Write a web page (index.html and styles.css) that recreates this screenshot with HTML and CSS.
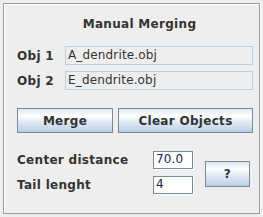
FILE: index.html
```html
<!DOCTYPE html>
<html lang="en">
<head>
  <meta charset="UTF-8" />
  <title>Manual Merging</title>
  <link rel="stylesheet" href="styles.css">
</head>
<body>

<div class="panel">
  <div class="title">Manual Merging</div>

  <div class="obj-row">
    <span class="lbl">Obj 1</span>
    <div class="field readonly">A_dendrite.obj</div>
  </div>
  <div class="obj-row">
    <span class="lbl">Obj 2</span>
    <div class="field readonly">E_dendrite.obj</div>
  </div>

  <div class="btn-row">
    <button class="btn merge">Merge</button>
    <button class="btn clear">Clear Objects</button>
  </div>

  <div class="params">
    <div class="param-list">
      <div class="param-row">
        <span class="lbl wide">Center distance</span>
        <div class="field edit">70.0</div>
      </div>
      <div class="param-row">
        <span class="lbl wide">Tail lenght</span>
        <div class="field edit">4</div>
      </div>
    </div>
    <button class="btn help">?</button>
  </div>
</div>

</body>
</html>
```

FILE: styles.css
```css
body {
  margin: 0;
  background: #eeeeee;
  font-family: "DejaVu Sans", sans-serif;
  font-size: 12px;
  line-height: 15px;
  color: #333333;
}

/* etched border like a swing titled panel */
.panel {
  margin: 3px 0 0 3px;
  width: 257px;
  height: 211px;
  border: 1px solid #9a9a9a;
  box-shadow: inset 1px 1px #ffffff, 1px 1px #ffffff;
  padding: 13px 0 0 13px;
  box-sizing: border-box;
}

.title {
  font-weight: bold;
  letter-spacing: 0.3px;
  text-align: center;
  width: 235px;
  padding-left: 10px;
  box-sizing: border-box;
}

.obj-row {
  display: flex;
  align-items: center;
  height: 19px;
  margin-bottom: 6px;
}

.title + .obj-row {
  margin-top: 14px;
}

.lbl {
  font-weight: bold;
  letter-spacing: 0.3px;
  width: 48px;
  padding-top: 1px;
}

.lbl.wide {
  width: 136px;
}

.field {
  box-sizing: border-box;
  height: 19px;
  padding: 1px 0 0 2px;
  letter-spacing: 0.15px;
  white-space: nowrap;
}

.field.readonly {
  width: 188px;
  border: 1px solid #b8cfe5;
  background: #eeeeee;
  color: #333333;
}

.field.edit {
  width: 40px;
  height: 18px;
  border: 1px solid #7a8a99;
  box-shadow: 1px 1px #ffffff;
  background: #ffffff;
  color: #222244;
  padding-top: 0;
}

.btn {
  font-family: "DejaVu Sans", sans-serif;
  font-size: 12px;
  font-weight: bold;
  letter-spacing: 0.3px;
  color: #333333;
  border: 1px solid #7a8a99;
  background: linear-gradient(to bottom, #dde8f3 0%, #ffffff 30%, #dde8f3 60%, #b8cfe5 100%);
  padding: 0;
  margin: 0;
  height: 25px;
  box-sizing: border-box;
}

.btn-row {
  display: flex;
  gap: 5px;
  margin-top: 18px;
}

.btn.merge {
  width: 96px;
}

.btn.clear {
  width: 135px;
}

.params {
  display: flex;
  align-items: center;
  margin-top: 18px;
}

.param-row {
  display: flex;
  align-items: center;
  height: 18px;
}

.param-row + .param-row {
  margin-top: 7px;
}

.btn.help {
  width: 45px;
  height: 26px;
  margin-left: 12px;
  margin-top: 2px;
}
```
